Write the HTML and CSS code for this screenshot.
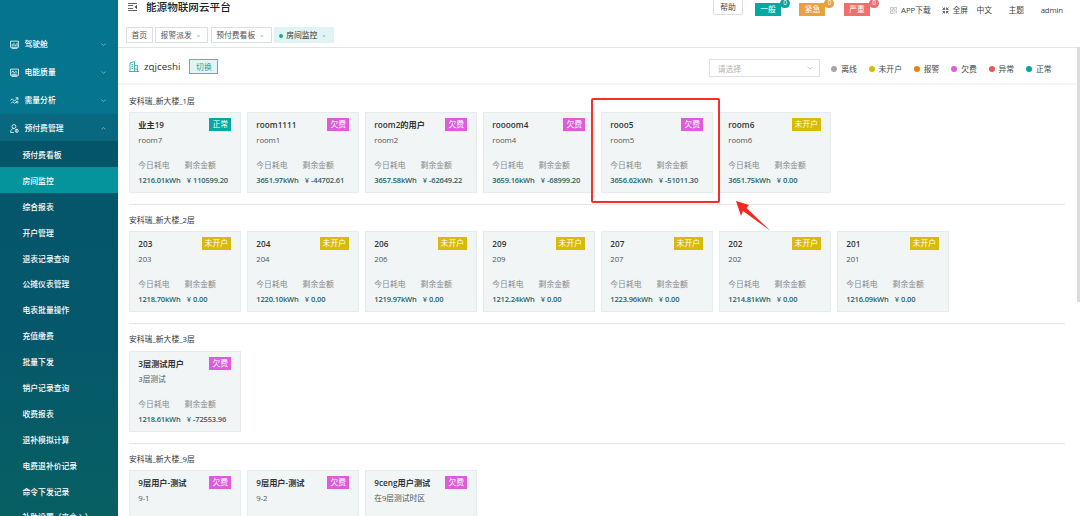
FILE: index.html
```
<!DOCTYPE html>
<html lang="zh-CN">
<head>
  <meta charset="UTF-8">
  <meta name="viewport" content="width=device-width, initial-scale=1.0">
  <title>能源物联网云平台</title>
  <link rel="stylesheet" href="styles.css">
</head>
<body>
  <div class="app">
    <aside class="sidebar">
      <div class="menu-item">
        <svg class="menu-icon" viewBox="0 0 16 16"><path d="M1 2h14v11H1zM3 15h10M4 11V7M7 11V5M10 11V8M12.500 11V5"/></svg>
        <span>驾驶舱</span>
        <svg class="arrow" viewBox="0 0 10 6"><path d="M1 1l4 4 4-4"/></svg>
      </div>
      <div class="menu-item">
        <svg class="menu-icon" viewBox="0 0 16 16"><path d="M1 2h14v11H1zM3 15h10M3 8l2-3 3 4 2-3 3 2M3 11h9"/></svg>
        <span>电能质量</span>
        <svg class="arrow" viewBox="0 0 10 6"><path d="M1 1l4 4 4-4"/></svg>
      </div>
      <div class="menu-item">
        <svg class="menu-icon" viewBox="0 0 16 16"><path d="M1 8l3-3 4 4 6-6M10 3h4v4M2 13l3-3 3 3 5-4"/><circle cx="13" cy="11" r="1.500"/></svg>
        <span>需量分析</span>
        <svg class="arrow" viewBox="0 0 10 6"><path d="M1 1l4 4 4-4"/></svg>
      </div>
      <div class="menu-item open">
        <svg class="menu-icon" viewBox="0 0 16 16"><circle cx="7" cy="4.500" r="3.500"/><path d="M1 15c0-4 2-7 6-7M1 15h6"/><circle cx="12" cy="12" r="2.800"/><path d="M12 9v6"/></svg>
        <span>预付费管理</span>
        <svg class="arrow" viewBox="0 0 10 6"><path d="M1 5l4-4 4 4"/></svg>
      </div>
      <ul class="submenu">
        <li>预付费看板</li>
        <li class="active">房间监控</li>
        <li>综合报表</li>
        <li>开户管理</li>
        <li>退表记录查询</li>
        <li>公摊仪表管理</li>
        <li>电表批量操作</li>
        <li>充值缴费</li>
        <li>批量下发</li>
        <li>销户记录查询</li>
        <li>收费报表</li>
        <li>退补模拟计算</li>
        <li>电费退补价记录</li>
        <li>命令下发记录</li>
        <li>补助设置（夹余入）</li>
      </ul>
    </aside>

    <main class="main">
      <header class="header">
        <svg class="fold" viewBox="0 0 9 8"><path d="M0 .5h9M0 2.500h5M0 5.500h5M0 7.500h9"/><path class="fill" d="M9 2v4L6.500 4z"/></svg>
        <h1>能源物联网云平台</h1>
        <div class="header-right">
          <button class="help">帮助</button>
          <div class="alarm normal">一般<span class="badge">0</span></div>
          <div class="alarm urgent">紧急<span class="badge">0</span></div>
          <div class="alarm serious">严重<span class="badge">0</span></div>
          <span class="link app-link"><svg class="qr" viewBox="0 0 14 14"><path d="M1 1h5v5H1zM8 1h5v5H8zM1 8h5v5H1zM8 8h2v2M13 8v2M8 13h2M11 11h2v2"/></svg>APP下载</span>
          <span class="link full-link"><svg class="full" viewBox="0 0 14 14"><path d="M1 1l4 4M5 1v4H1M13 1L9 5M9 1v4h4M1 13l4-4M5 13V9H1M13 13L9 9M9 13V9h4"/></svg>全屏</span>
          <span class="link lang-link">中文</span>
          <span class="link theme-link">主题</span>
          <span class="link">admin</span>
        </div>
      </header>

      <nav class="tags">
        <span class="tag">首页</span>
        <span class="tag">报警派发<i>×</i></span>
        <span class="tag">预付费看板<i>×</i></span>
        <span class="tag current"><b></b>房间监控<i>×</i></span>
      </nav>

      <div class="toolbar">
        <svg class="building" viewBox="0 0 20 22"><path d="M2 21V4l9-3v20M11 9h6v12M0 21h20M5 7h3M5 11h3M5 15h3M14 13v5"/></svg>
        <span class="project">zqjceshi</span>
        <button class="switch">切换</button>
        <div class="select">请选择<svg viewBox="0 0 10 6"><path d="M1 1l4 4 4-4"/></svg></div>
        <ul class="legend">
          <li class="offline">离线</li>
          <li class="unopened">未开户</li>
          <li class="alert">报警</li>
          <li class="arrears">欠费</li>
          <li class="abnormal">异常</li>
          <li class="ok">正常</li>
        </ul>
      </div>

      <div class="content" id="content"></div>

      <div class="scrollbar"></div>
      <div class="highlight"></div>
      <svg class="pointer" viewBox="0 0 36 32"><path d="M1 1l13 4-2.500 3L35.500 31 8 11l-2 5z"/></svg>
    </main>
  </div>
  <script src="script.js"></script>
</body>
</html>
```
FILE: styles.css
```
* {
  box-sizing: border-box;
}
body {
  margin: 0;
  font-family: "Open Sans", "Noto Sans CJK SC", sans-serif;
  font-size: 7.8px;
  color: #444;
  background: #fff;
}
ul {
  list-style: none;
  margin: 0;
  padding: 0;
}
svg {
  fill: none;
  stroke: currentColor;
}
button {
  font: inherit;
  padding: 0;
}
.app {
  display: flex;
  height: 516px;
  overflow: hidden;
}

/* sidebar */
.sidebar {
  width: 118px;
  flex: none;
  height: 516px;
  overflow: hidden;
  padding-top: 30px;
  color: #fff;
  background: #05758e;
}
.menu-item {
  height: 28px;
  line-height: 28px;
  display: flex;
  align-items: center;
  padding: 0 12px 0 10px;
  font-weight: 500;
}
.menu-item.open {
  background: #07687f;
}
.menu-icon {
  width: 9px;
  height: 9px;
  margin-right: 5.500px;
  stroke-width: 1.4;
}
.arrow {
  width: 5px;
  height: 3px;
  margin-left: auto;
  opacity: 0.8;
}
.submenu {
  margin-top: -1px;
  height: 400px;
  background: linear-gradient(#05556a 0%, #05586b 50%, #086061 100%);
}
.submenu li {
  height: 25.900px;
  line-height: 28.500px;
  padding-left: 22.500px;
  font-weight: 500;
  white-space: nowrap;
}
.submenu .active {
  background: #05949b;
}

/* header */
.main {
  position: relative;
  flex: 1;
  min-width: 0;
}
.header {
  height: 27px;
  display: flex;
  align-items: flex-start;
  padding-left: 10px;
}
.fold {
  width: 9px;
  height: 8px;
  margin-top: 3px;
  stroke-width: 1;
  color: #666;
}
.fold .fill {
  fill: #444;
  stroke: none;
}
h1 {
  margin: 0 0 0 9px;
  font-size: 10.6px;
  line-height: 15px;
  font-weight: 500;
  color: #222;
}
.header-right {
  margin-left: auto;
  display: flex;
  padding-right: 17px;
}
.help {
  width: 30px;
  height: 17px;
  margin: -2px 12px 0 0;
  color: #444;
  background: #fff;
  border: 1px solid #dcdfe6;
  border-radius: 1px;
}
.alarm {
  position: relative;
  width: 26px;
  height: 13px;
  margin: 3px 18.500px 0 0;
  line-height: 13px;
  text-align: center;
  color: #fff;
}
.badge {
  position: absolute;
  top: -4px;
  right: -9px;
  width: 10px;
  height: 9px;
  border-radius: 5px;
  line-height: 8px;
  font-size: 6.500px;
}
.normal, .normal .badge {
  background: #02a8a2;
}
.urgent, .urgent .badge {
  background: #e6a23c;
}
.serious, .serious .badge {
  background: #f56c6c;
}
.alarm.serious {
  margin-right: 20.500px;
}
.link {
  height: 20px;
  line-height: 20px;
  display: flex;
  align-items: center;
}
.link:last-child {
  letter-spacing: -0.15px;
}
.qr, .full {
  width: 7px;
  height: 7px;
  margin-right: 3.500px;
}
.qr {
  color: #999;
}
.full {
  stroke-width: 1.5;
}
.app-link {
  margin-right: 11px;
}
.full-link {
  margin-right: 8.500px;
}
.lang-link, .theme-link {
  margin-right: 16.500px;
}

/* opened page tags */
.tags {
  height: 21px;
  display: flex;
  gap: 2.500px;
  padding-left: 8px;
  border-bottom: 1px solid #e2e5e6;
}
.tag {
  height: 16px;
  line-height: 15px;
  padding: 0 4.500px;
  border: 1px solid #dcdfe2;
  color: #555;
  white-space: nowrap;
}
.tag i {
  margin: 0 2.500px 0 5px;
  font-size: 6px;
  font-style: normal;
  color: #999;
}
.tag b {
  display: inline-block;
  width: 4px;
  height: 4px;
  margin-right: 3px;
  border-radius: 50%;
  background: #13a8a2;
}
.tag.current {
  padding-left: 4px;
  color: #333;
  background: #e0f4f3;
  border-color: #e0f4f3;
}

/* toolbar */
.toolbar {
  height: 37px;
  display: flex;
  align-items: center;
  padding: 0 28.500px 0 11px;
  border-bottom: 2px solid #f4f5f5;
}
.building {
  width: 10px;
  height: 11px;
  margin-top: 2px;
  color: #13a8a2;
  stroke-width: 1.6;
}
.project {
  margin: 1px 9px 0 5px;
  font-size: 9.800px;
  color: #333;
}
.switch {
  width: 29px;
  height: 15px;
  margin-top: 2px;
  color: #13a8a2;
  background: #e2f5f4;
  border: 1px solid #4bbdb9;
}
.select {
  width: 111px;
  height: 18px;
  margin: 5px 11.500px 0 auto;
  padding: 0 6px 0 8px;
  display: flex;
  align-items: center;
  justify-content: space-between;
  color: #b0b3b8;
  border: 1px solid #dcdfe6;
}
.select svg {
  width: 6px;
  height: 4px;
  color: #999;
}
.legend {
  display: flex;
  margin-top: 6px;
}
.legend li {
  display: flex;
  align-items: center;
  margin-right: 11.800px;
}
.legend li:last-child {
  margin-right: 0;
}
.legend li::before {
  content: "";
  width: 6px;
  height: 6px;
  margin-right: 4px;
  border-radius: 50%;
}
.offline::before { background: #a8a8a8; }
.unopened::before { background: #d5bb06; }
.alert::before { background: #e6820a; }
.arrears::before { background: #e05cdc; }
.abnormal::before { background: #e65a5a; }
.ok::before { background: #02a8a2; }

/* rooms */
.content {
  padding: 10px 15px 0 11px;
}
.floor {
  height: 119.200px;
}
.floor h2 {
  margin: 0;
  height: 17.300px;
  line-height: 13.500px;
  font-size: 7.8px;
  font-weight: 400;
  color: #333;
}
.cards {
  display: flex;
  gap: 6px;
  height: 93px;
  border-bottom: 1px solid #e2e5e6;
}
.card {
  width: 112px;
  height: 81px;
  padding: 5px 9px 0 8.300px;
  background: #f1f5f6;
  border: 1px solid #e6ecec;
}
.card-head {
  display: flex;
  justify-content: space-between;
  height: 15px;
}
.name {
  line-height: 13px;
  font-size: 8.200px;
  font-weight: 600;
  color: #333;
}
.status {
  height: 13px;
  line-height: 13px;
  padding: 0 3px;
  color: #fff;
}
.status.ok { background: #02a8a2; }
.status.arrears { background: #df5bdb; }
.status.unopened { background: #d7bb07; }
.status::before {
  content: none;
}
.room {
  height: 25px;
  line-height: 15px;
  letter-spacing: -0.1px;
  color: #555;
}
.figures {
  display: grid;
  grid-template-columns: 46.300px 1fr;
  line-height: 15px;
  white-space: nowrap;
}
.figures span {
  color: #888;
}
.figures strong {
  font-weight: 600;
  font-size: 7.500px;
  letter-spacing: -0.17px;
  color: #2c6464;
}
.figures em {
  display: inline-block;
  width: 8.500px;
  font-style: normal;
  text-align: center;
}

/* overlays */
.scrollbar {
  position: absolute;
  top: 47px;
  right: 0;
  width: 3px;
  height: 255px;
  background: #dcdcdc;
}
.highlight {
  position: absolute;
  left: 473px;
  top: 98px;
  width: 129px;
  height: 105px;
  border: 2px solid #f03228;
  border-radius: 2px;
}
.pointer {
  position: absolute;
  left: 617px;
  top: 200px;
  width: 36px;
  height: 32px;
  fill: #f5281e;
  stroke: none;
}
```
FILE: script.js
```
const labels = {
  ok: '正常',
  arrears: '欠费',
  unopened: '未开户'
};

// name, room, status, energy, balance
const floors = [
  {
    title: '安科瑞_新大楼_1层',
    rooms: [
      ['业主19', 'room7', 'ok', '1216.01', '110599.20'],
      ['room1111', 'room1', 'arrears', '3651.97', '-44702.61'],
      ['room2的用户', 'room2', 'arrears', '3657.58', '-62649.22'],
      ['roooom4', 'room4', 'arrears', '3659.16', '-68999.20'],
      ['rooo5', 'room5', 'arrears', '3656.62', '-51011.30'],
      ['room6', 'room6', 'unopened', '3651.75', '0.00']
    ]
  },
  {
    title: '安科瑞_新大楼_2层',
    rooms: [
      ['203', '203', 'unopened', '1218.70', '0.00'],
      ['204', '204', 'unopened', '1220.10', '0.00'],
      ['206', '206', 'unopened', '1219.97', '0.00'],
      ['209', '209', 'unopened', '1212.24', '0.00'],
      ['207', '207', 'unopened', '1223.96', '0.00'],
      ['202', '202', 'unopened', '1214.81', '0.00'],
      ['201', '201', 'unopened', '1216.09', '0.00']
    ]
  },
  {
    title: '安科瑞_新大楼_3层',
    rooms: [
      ['3层测试用户', '3层测试', 'arrears', '1218.61', '-72553.96']
    ]
  },
  {
    title: '安科瑞_新大楼_9层',
    rooms: [
      ['9层用户-测试', '9-1', 'arrears'],
      ['9层用户-测试', '9-2', 'arrears'],
      ['9ceng用户测试', '在9层测试时区', 'arrears']
    ]
  }
];

function figures(energy, balance) {
  if (!energy) return '';
  return `
      <div class="figures">
        <span>今日耗电</span><span>剩余金额</span>
        <strong>${energy}kWh</strong><strong><em>¥</em>${balance}</strong>
      </div>`;
}

function card([name, room, status, energy, balance]) {
  return `
    <div class="card">
      <div class="card-head">
        <div class="name">${name}</div>
        <div class="status ${status}">${labels[status]}</div>
      </div>
      <div class="room">${room}</div>${figures(energy, balance)}
    </div>`;
}

document.getElementById('content').innerHTML = floors.map(floor => `
  <section class="floor">
    <h2>${floor.title}</h2>
    <div class="cards">${floor.rooms.map(card).join('')}</div>
  </section>`).join('');
```
